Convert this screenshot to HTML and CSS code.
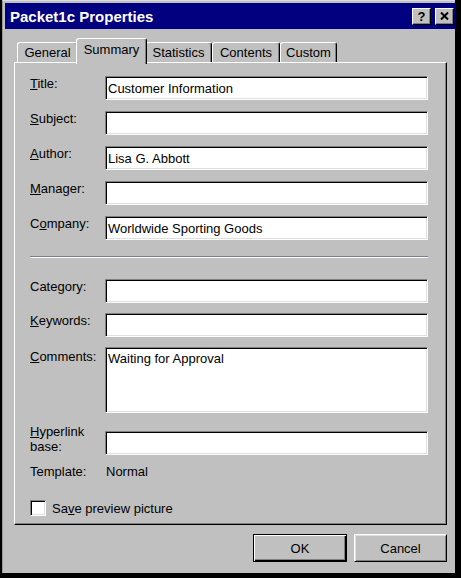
FILE: index.html
```html
<!DOCTYPE html>
<html lang="en">
  <head>
    <link rel="stylesheet" href="styles.css">
    <title>Packet1c Properties</title>
  </head>
  <body>
    <div class="window">
      <div class="titlebar">
        <span class="title">Packet1c Properties</span>
        <div class="caption-buttons">
          <button class="cap-btn cap-help">?</button>
          <button class="cap-btn cap-close">
            <svg width="9" height="8" viewBox="0 0 9 8">
              <path d="M1 0.5 L8 7.5 M8 0.5 L1 7.5" stroke="#000" stroke-width="2" fill="none" />
            </svg>
          </button>
        </div>
      </div>

      <div class="content">
        <div class="tabs">
          <div class="tab tab-general">General</div>
          <div class="tab tab-summary selected">Summary</div>
          <div class="tab tab-statistics">Statistics</div>
          <div class="tab tab-contents">Contents</div>
          <div class="tab tab-custom">Custom</div>
        </div>

        <div class="panel">
          <div class="section section-top">
            <div class="field">
              <label class="label"><u>T</u>itle:</label>
              <input class="input" type="text" value="Customer Information">
            </div>
            <div class="field">
              <label class="label"><u>S</u>ubject:</label>
              <input class="input" type="text" value="">
            </div>
            <div class="field">
              <label class="label"><u>A</u>uthor:</label>
              <input class="input" type="text" value="Lisa G. Abbott">
            </div>
            <div class="field">
              <label class="label"><u>M</u>anager:</label>
              <input class="input" type="text" value="">
            </div>
            <div class="field">
              <label class="label">C<u>o</u>mpany:</label>
              <input class="input" type="text" value="Worldwide Sporting Goods">
            </div>
          </div>

          <div class="separator"></div>

          <div class="section section-bottom">
            <div class="field">
              <label class="label">Cate<u>g</u>ory:</label>
              <input class="input" type="text" value="">
            </div>
            <div class="field">
              <label class="label"><u>K</u>eywords:</label>
              <input class="input" type="text" value="">
            </div>
            <div class="field field-comments">
              <label class="label"><u>C</u>omments:</label>
              <textarea class="input textarea">Waiting for Approval</textarea>
            </div>
          </div>

          <div class="field field-hyperlink">
            <label class="label"><u>H</u>yperlink<br>base:</label>
            <input class="input" type="text" value="">
          </div>

          <div class="template-row">
            <span class="label">Template:</span>
            <span>Normal</span>
          </div>

          <div class="check-row">
            <span class="checkbox"></span>
            <span>Sa<u>v</u>e preview picture</span>
          </div>
        </div>

        <div class="actions">
          <button class="btn btn-default">OK</button>
          <button class="btn btn-cancel">Cancel</button>
        </div>
      </div>
    </div>
  </body>
</html>
```

FILE: styles.css
```css
body {
  margin: 0;
  width: 461px;
  height: 578px;
  background-color: #000;
  font-family: "Liberation Sans", Arial, sans-serif;
  font-size: 13px;
  color: #000;
  overflow: hidden;
}

.window {
  box-sizing: border-box;
  width: 453px;
  height: 573px;
  margin-left: 2px;
  padding: 2px 0 0 2px;
  background-color: #c0c0c0;
  border-top: 1px solid #dcdcdc;
  border-left: 1px solid #9a9a9a;
}

.titlebar {
  display: flex;
  align-items: center;
  justify-content: space-between;
  height: 26px;
  padding: 0 1px 0 5px;
  background-color: #000080;
}

.title {
  color: #fff;
  font-weight: bold;
  font-size: 15px;
}

.caption-buttons {
  display: flex;
  gap: 4px;
}

.cap-btn {
  box-sizing: border-box;
  width: 19px;
  height: 17px;
  padding: 0;
  display: flex;
  align-items: center;
  justify-content: center;
  background-color: #c0c0c0;
  border: 1px solid;
  border-color: #fff #000 #000 #fff;
  box-shadow: inset -1px -1px #808080;
  font-family: "Liberation Sans", Arial, sans-serif;
  font-weight: bold;
  font-size: 13px;
  line-height: 13px;
  color: #000;
}

.content {
  padding: 9px 0 0 9px;
}

/* tabs */
.tabs {
  display: flex;
  align-items: flex-end;
  height: 24px;
  padding-left: 3px;
}

.tab {
  box-sizing: border-box;
  position: relative;
  height: 20px;
  line-height: 19px;
  text-align: center;
  background-color: #c0c0c0;
  border-top: 1px solid #fff;
  border-left: 1px solid #fff;
  border-right: 1px solid #000;
  border-radius: 3px 3px 0 0;
  box-shadow: inset -1px 0 #808080;
}

.tab-general { width: 61px; }
.tab-summary { width: 71px; }
.tab-statistics { width: 67px; }
.tab-contents { width: 68px; }
.tab-custom { width: 57px; }

.tab.selected {
  z-index: 1;
  height: 26px;
  line-height: 22px;
  margin: 0 -2px -2px -2px;
  padding-bottom: 2px;
}

/* panel */
.panel {
  box-sizing: border-box;
  width: 433px;
  height: 463px;
  padding: 13px 0 0 15px;
  border: 1px solid;
  border-color: #fff #000 #000 #fff;
  box-shadow: inset -1px -1px #808080;
}

.section {
  display: flex;
  flex-direction: column;
}

.section-top {
  gap: 11px;
}

.section-bottom {
  gap: 10px;
  margin-top: 21px;
}

.field {
  display: flex;
  align-items: flex-start;
}

.label {
  width: 75px;
  flex: none;
  line-height: 15px;
}

.input {
  box-sizing: border-box;
  width: 323px;
  height: 24px;
  margin: 0;
  padding: 0 2px;
  background-color: #fff;
  border: 1px solid;
  border-color: #808080 #fff #fff #808080;
  box-shadow: inset 1px 1px #000, inset -1px -1px #dfdfdf;
  font-family: "Liberation Sans", Arial, sans-serif;
  font-size: 13px;
  color: #000;
  outline: none;
}

.textarea {
  height: 66px;
  padding: 3px 2px;
  line-height: 15px;
  resize: none;
  overflow: hidden;
}

.field-comments .label {
  margin-top: 2px;
}

.separator {
  width: 398px;
  margin-top: 16px;
  border-top: 1px solid #7c7c90;
  border-bottom: 1px solid #fff;
}

.field-hyperlink {
  margin-top: 18px;
}

.field-hyperlink .label {
  margin-top: -7px;
}

.template-row {
  display: flex;
  margin-top: 9px;
  line-height: 15px;
}

.template-row .label {
  width: 76px;
}

.check-row {
  display: flex;
  align-items: center;
  gap: 6px;
  margin-top: 21px;
  line-height: 15px;
}

.checkbox {
  box-sizing: border-box;
  width: 16px;
  height: 16px;
  background-color: #fff;
  border: 1px solid;
  border-color: #808080 #fff #fff #808080;
  box-shadow: inset 1px 1px #000, inset -1px -1px #dfdfdf;
}

/* bottom buttons */
.actions {
  display: flex;
  justify-content: flex-end;
  gap: 7px;
  width: 433px;
  margin-top: 9px;
}

.btn {
  box-sizing: border-box;
  height: 28px;
  padding: 0;
  background-color: #c0c0c0;
  font-family: "Liberation Sans", Arial, sans-serif;
  font-size: 13px;
  color: #000;
}

.btn-default {
  width: 94px;
  border: 1px solid #000;
  box-shadow: inset 1px 1px #fff, inset -1px -1px #000, inset -2px -2px #808080;
}

.btn-cancel {
  width: 93px;
  border: 1px solid;
  border-color: #fff #000 #000 #fff;
  box-shadow: inset 1px 1px #dfdfdf, inset -1px -1px #808080;
}
```
